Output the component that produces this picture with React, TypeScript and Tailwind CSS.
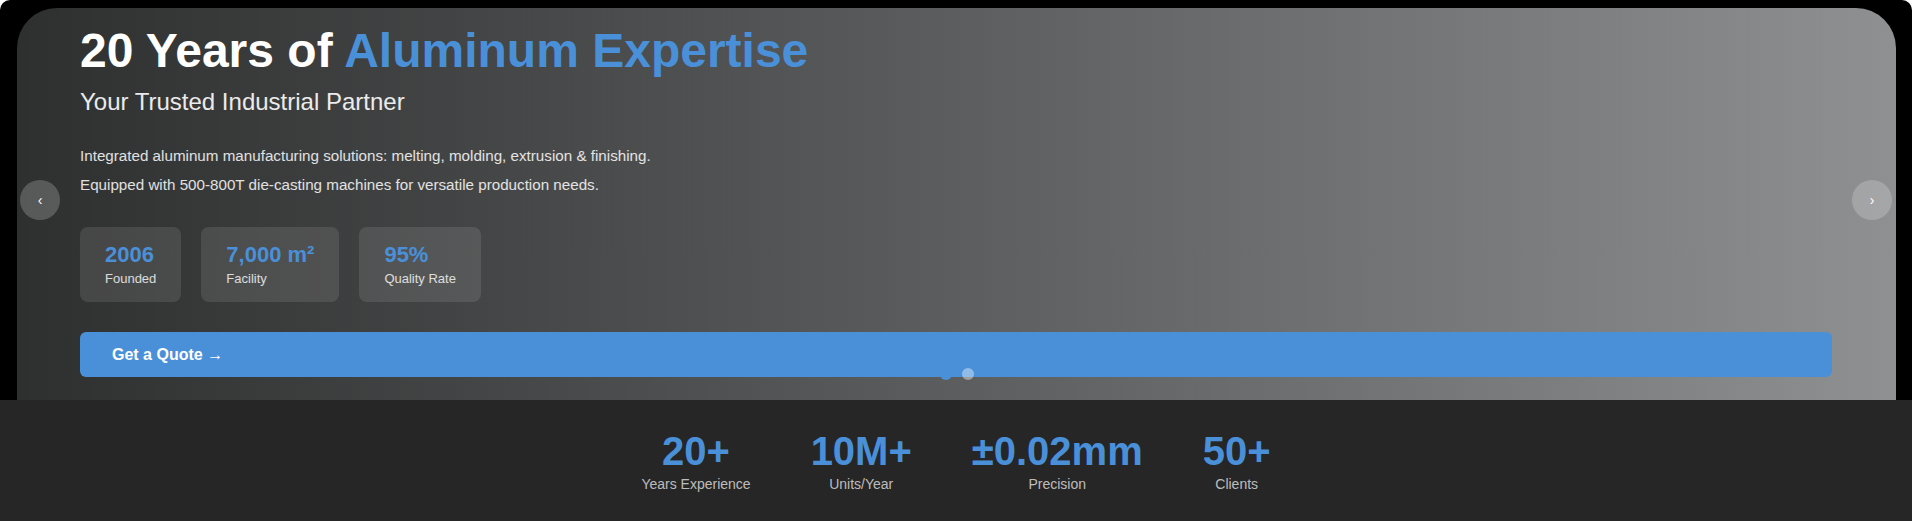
/**
 * Hero slider with company highlights, followed by a key-figures strip.
 */

interface Highlight {
  readonly value: string;
  readonly label: string;
}

const highlights: readonly Highlight[] = [
  { value: "2006", label: "Founded" },
  { value: "7,000 m²", label: "Facility" },
  { value: "95%", label: "Quality Rate" },
];

const keyFigures: readonly Highlight[] = [
  { value: "20+", label: "Years Experience" },
  { value: "10M+", label: "Units/Year" },
  { value: "±0.02mm", label: "Precision" },
  { value: "50+", label: "Clients" },
];

function SlideArrow({
  direction,
}: {
  readonly direction: "prev" | "next";
}): React.ReactElement {
  const isPrev = direction === "prev";
  return (
    <button
      type="button"
      aria-label={isPrev ? "Previous slide" : "Next slide"}
      className={`absolute top-[180px] flex h-10 w-10 items-center justify-center rounded-full bg-white/20 text-[14px] leading-none text-white ${
        isPrev ? "left-5" : "right-5"
      }`}
    >
      {isPrev ? "‹" : "›"}
    </button>
  );
}

function HighlightCard({ value, label }: Highlight): React.ReactElement {
  return (
    <div className="rounded-lg bg-white/10 px-[25px] py-[15px]">
      <p className="text-[22px] font-bold leading-[26px] text-[#4a90d9]">
        {value}
      </p>
      <p className="mt-[3px] text-[13px] leading-4 text-white/80">{label}</p>
    </div>
  );
}

export default function App(): React.ReactElement {
  return (
    <div className="min-h-screen bg-white font-['Liberation_Sans',Arial,sans-serif]">
      <div className="relative rounded-t-[10px] bg-black pl-[17px] pr-4 pt-2">
        <section className="relative h-[392px] rounded-t-[40px] bg-gradient-to-r from-[#2e2f2f] to-[#8f9092] pl-[63px] pr-[64px] pt-[14px]">
          <h1 className="text-[48px] font-bold leading-[1.2] text-white">
            20 Years of <span className="text-[#4a90d9]">Aluminum Expertise</span>
          </h1>
          <p className="mt-2 text-[24px] leading-[1.2] text-white/90">
            Your Trusted Industrial Partner
          </p>
          <div className="mt-[25px] text-[15.2px] leading-[29px] text-white/85">
            <p>
              Integrated aluminum manufacturing solutions: melting, molding,
              extrusion &amp; finishing.
            </p>
            <p>
              Equipped with 500-800T die-casting machines for versatile
              production needs.
            </p>
          </div>

          <div className="mt-[28px] flex gap-5">
            {highlights.map((h) => (
              <HighlightCard key={h.label} value={h.value} label={h.label} />
            ))}
          </div>

          <a
            href="#quote"
            className="mt-[30px] flex h-[45px] items-center rounded-md bg-[#4a90d9] px-8 text-[16px] font-bold text-white"
          >
            Get a Quote →
          </a>

          <div className="absolute bottom-5 left-1/2 flex -translate-x-1/2 gap-2.5">
            <span className="h-3 w-3 rounded-full bg-[#4a90d9]" />
            <span className="h-3 w-3 rounded-full bg-white/40" />
          </div>
        </section>

        <SlideArrow direction="prev" />
        <SlideArrow direction="next" />
      </div>

      <div className="flex justify-center gap-[60px] bg-[#262626] pb-[30px] pt-[29px]">
        {keyFigures.map((f) => (
          <div key={f.label} className="flex flex-col items-center">
            <span className="text-[40px] font-bold leading-[44px] text-[#4a90d9]">
              {f.value}
            </span>
            <span className="mt-[3px] text-[14px] leading-4 text-white/70">
              {f.label}
            </span>
          </div>
        ))}
      </div>
    </div>
  );
}
